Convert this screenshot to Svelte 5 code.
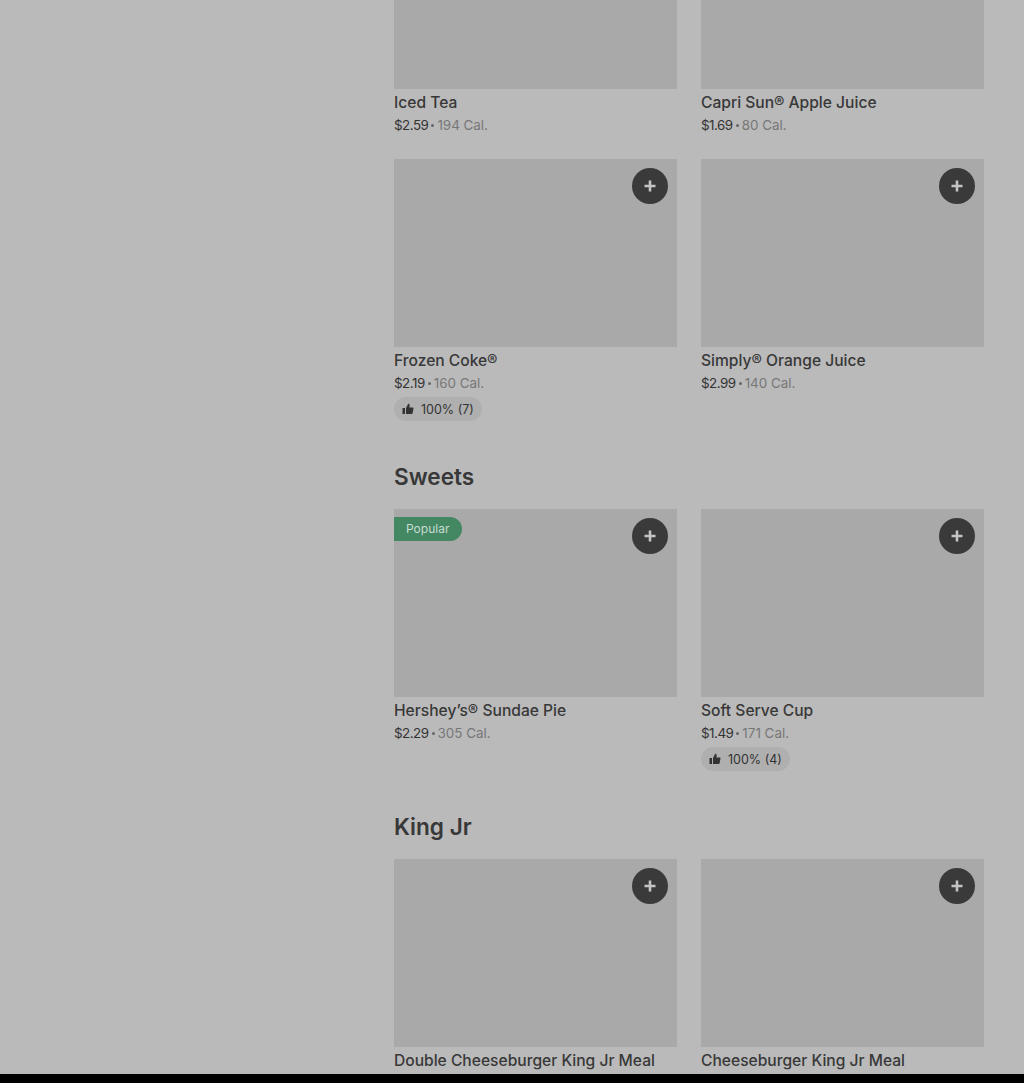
<script lang="ts">
  type Item = { name: string; price: string; cal?: string; rating?: string; popular?: boolean };
  type Section = { title?: string; items: Item[]; cropped?: boolean };

  const sections: Section[] = [
    {
      cropped: true,
      items: [
        { name: 'Iced Tea', price: '$2.59', cal: '194 Cal.' },
        { name: 'Capri Sun® Apple Juice', price: '$1.69', cal: '80 Cal.' }
      ]
    },
    {
      items: [
        { name: 'Frozen Coke®', price: '$2.19', cal: '160 Cal.', rating: '100% (7)' },
        { name: 'Simply® Orange Juice', price: '$2.99', cal: '140 Cal.' }
      ]
    },
    {
      title: 'Sweets',
      items: [
        { name: 'Hershey’s® Sundae Pie', price: '$2.29', cal: '305 Cal.', popular: true },
        { name: 'Soft Serve Cup', price: '$1.49', cal: '171 Cal.', rating: '100% (4)' }
      ]
    },
    {
      title: 'King Jr',
      items: [
        { name: 'Double Cheeseburger King Jr Meal', price: '' },
        { name: 'Cheeseburger King Jr Meal', price: '' }
      ]
    }
  ];
</script>

<div class="page">
  <main class="menu">
    {#each sections as section}
      {#if section.title}
        <h2>{section.title}</h2>
      {/if}
      <div class="grid" class:cropped={section.cropped}>
        {#each section.items as item}
          <article class="card">
            <div class="photo">
              {#if item.popular}
                <span class="popular">Popular</span>
              {/if}
              {#if !section.cropped}
                <button class="add" aria-label="Add {item.name}">
                  <svg viewBox="0 0 12 12" width="12" height="12">
                    <path d="M4.7 0.5h2.6v4.2h4.2v2.6H7.3v4.2H4.7V7.3H0.5V4.7h4.2z" fill="#c4c4c4" />
                  </svg>
                </button>
              {/if}
            </div>
            <div class="name">{item.name}</div>
            {#if item.price}
              <div class="meta"><span class="price">{item.price}</span><span class="dot"></span><span class="cal">{item.cal}</span></div>
            {/if}
            {#if item.rating}
              <div class="rating">
                <svg viewBox="0 0 12 12" width="12" height="12">
                  <path d="M0.5 5H3v6H0.5zM4 5l2.2-4.2c.9 0 1.5.6 1.5 1.5L7.4 4.4h3.2c.6 0 1 .5.9 1.1l-.9 4.7c-.1.5-.5.8-1 .8H4z" fill="#333" />
                </svg>
                <span>{item.rating}</span>
              </div>
            {/if}
          </article>
        {/each}
      </div>
    {/each}
  </main>
  <div class="bottom-bar"></div>
</div>

<style>
  :global(body) { background: #bababa; font-family: Inter, "Liberation Sans", sans-serif; color: #333; }
  .page { height: 1083px; display: flex; flex-direction: column; overflow: hidden; background: #bababa; }
  .menu { flex: 1; min-height: 0; overflow: hidden; padding-left: 394px; width: 590px; }
  .grid { display: grid; grid-template-columns: 283px 283px; column-gap: 24px; }
  .card { min-width: 0; padding-bottom: 24px; }
  .photo { position: relative; height: 188px; background: #a9a9a9; }
  .cropped .photo { height: 89px; }
  .name { margin-top: 4px; font-size: 15.6px; line-height: 20px; font-weight: 500; color: #383838; white-space: nowrap; }
  .meta { display: flex; align-items: center; gap: 3px; margin-top: 2px; font-size: 13.4px; line-height: 20px; color: #333; }
  .price { letter-spacing: -0.5px; }
  .dot { width: 3px; height: 3px; border-radius: 50%; background: #666; margin-top: 1px; }
  .cal { color: #777; }
  .rating { display: flex; width: fit-content; align-items: center; gap: 7px; margin-top: 4px; height: 24px; padding: 0 8px; border-radius: 12px; background: #afafaf; font-size: 12.5px; color: #333; }
  h2 { margin: 16px 0 16px; font-size: 22.6px; line-height: 32px; font-weight: 600; color: #383838; }
  .popular { position: absolute; top: 8px; left: 0; height: 24px; padding: 0 13px 0 12px; border-radius: 0 12px 12px 0; background: #438763; color: #c9dcd1; font-size: 12px; line-height: 24px; }
  .add { position: absolute; top: 9px; right: 9px; width: 36px; height: 36px; padding: 0; border: 0; border-radius: 50%; background: #3a3a3a; display: flex; align-items: center; justify-content: center; }
  .bottom-bar { height: 9px; flex: none; background: #000; }
</style>
